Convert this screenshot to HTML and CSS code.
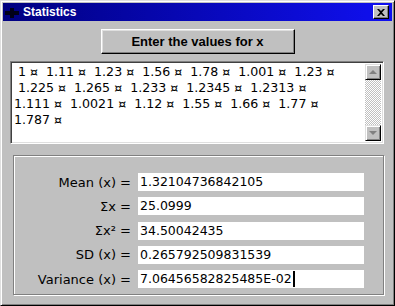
FILE: index.html
```html
<!DOCTYPE html>
<html>
<head>
    <title>Statistics</title>
    <link rel="stylesheet" href="styles.css">
</head>
<body>
    <div class="window">
        <div class="titlebar">
            <svg class="app-icon" width="14" height="10" viewBox="0 0 14 10">
                <path d="M5 0h4v3h5v4h-5v3h-4v-3h-5v-4h5z" fill="#000018"/>
            </svg>
            <span class="title">Statistics</span>
            <div class="close-btn">
                <svg width="8" height="7" viewBox="0 0 8 7">
                    <path d="M0 0h2l2 2 2-2h2l-3 3.5 3 3.5h-2l-2-2-2 2h-2l3-3.5z" fill="#000"/>
                </svg>
            </div>
        </div>

        <div class="client">
            <div class="enter-btn">Enter the values for x</div>

            <div class="values-box">
                <div class="values-text"> 1 ¤  1.11 ¤  1.23 ¤  1.56 ¤  1.78 ¤  1.001 ¤  1.23 ¤
 1.225 ¤  1.265 ¤  1.233 ¤  1.2345 ¤  1.2313 ¤
1.111 ¤  1.0021 ¤  1.12 ¤  1.55 ¤  1.66 ¤  1.77 ¤
1.787 ¤</div>
                <div class="scrollbar">
                    <div class="scroll-btn"><span class="arrow-up"></span></div>
                    <div class="scroll-track"></div>
                    <div class="scroll-btn"><span class="arrow-down"></span></div>
                </div>
            </div>

            <div class="results">
                <span class="label">Mean (x) =</span>
                <div class="field">1.32104736842105</div>
                <span class="label">&Sigma;x =</span>
                <div class="field">25.0999</div>
                <span class="label">&Sigma;x² =</span>
                <div class="field">34.50042435</div>
                <span class="label">SD (x) =</span>
                <div class="field">0.265792509831539</div>
                <span class="label">Variance (x) =</span>
                <div class="field">7.06456582825485E-02<span class="caret"></span></div>
            </div>
        </div>
    </div>
</body>
</html>
```

FILE: styles.css
```css
* {
    box-sizing: border-box;
}
body {
    margin: 0;
    background-color: #c0c0c0;
    font-family: "DejaVu Sans", Verdana, sans-serif;
}
.window {
    width: 395px;
    height: 306px;
    padding: 3px;
    background-color: #c0c0c0;
    border: 1px solid;
    border-color: #dfdfdf #000000 #000000 #dfdfdf;
    box-shadow: inset 1px 1px 0 #ffffff, inset -1px -1px 0 #808080;
}
.titlebar {
    height: 18px;
    margin: -1px -1px 0 -1px;
    display: flex;
    align-items: center;
    padding: 0 3px 0 2px;
    background: linear-gradient(to right, #000080, #1010f0);
    color: #ffffff;
}
.app-icon {
    margin: 1px 4px 0 0;
}
.title {
    font-family: "Liberation Sans", Arial, sans-serif;
    font-weight: bold;
    font-size: 12px;
    flex: 1;
}
.close-btn {
    width: 16px;
    height: 14px;
    background-color: #c0c0c0;
    border: 1px solid;
    border-color: #ffffff #000000 #000000 #ffffff;
    box-shadow: inset -1px -1px 0 #808080;
    display: flex;
    align-items: center;
    justify-content: center;
}
.client {
    display: flex;
    flex-direction: column;
    align-items: center;
}
.enter-btn {
    margin-top: 8px;
    width: 194px;
    height: 25px;
    display: flex;
    align-items: center;
    justify-content: center;
    font-family: "Liberation Sans", Arial, sans-serif;
    font-weight: bold;
    font-size: 13px;
    color: #000000;
    border: 1px solid;
    border-color: #ffffff #000000 #000000 #ffffff;
    box-shadow: inset -1px -1px 0 #808080, inset 1px 1px 0 #dfdfdf;
}
.values-box {
    align-self: flex-start;
    margin: 7px 0 0 6px;
    width: 374px;
    height: 83px;
    display: flex;
    background-color: #ffffff;
    border: 1px solid;
    border-color: #808080 #ffffff #ffffff #808080;
    box-shadow: inset 1px 1px 0 #404040, inset -1px -1px 0 #dfdfdf;
    padding: 2px;
}
.values-text {
    flex: 1;
    white-space: pre;
    font-size: 12.6px;
    line-height: 16px;
    padding: 0 0 0 1px;
    color: #000000;
    overflow: hidden;
}
.scrollbar {
    width: 16px;
    display: flex;
    flex-direction: column;
}
.scroll-btn {
    height: 16px;
    background-color: #c0c0c0;
    border: 1px solid;
    border-color: #dfdfdf #000000 #000000 #dfdfdf;
    box-shadow: inset 1px 1px 0 #ffffff, inset -1px -1px 0 #808080;
    display: flex;
    align-items: center;
    justify-content: center;
}
.arrow-up, .arrow-down {
    width: 0;
    height: 0;
    border-left: 4px solid transparent;
    border-right: 4px solid transparent;
}
.arrow-up {
    border-bottom: 4px solid #808080;
}
.arrow-down {
    border-top: 4px solid #808080;
}
.scroll-track {
    flex: 1;
    background-color: #c0c0c0;
    background-image: repeating-conic-gradient(#ffffff 0 25%, #c0c0c0 0 50%);
    background-size: 2px 2px;
}
.results {
    align-self: flex-start;
    margin: 11px 0 0 9px;
    width: 371px;
    height: 140px;
    border: 1px solid #808080;
    box-shadow: 1px 1px 0 #ffffff, inset 1px 1px 0 #ffffff;
    display: grid;
    grid-template-columns: 117px 226px;
    column-gap: 7px;
    row-gap: 6.25px;
    align-content: start;
    align-items: center;
    padding: 17px 0 0 0;
}
.label {
    text-align: right;
    font-size: 13px;
    color: #000000;
}
.field {
    height: 18px;
    background-color: #ffffff;
    font-size: 12.5px;
    line-height: 18px;
    padding-left: 2px;
    color: #000000;
    display: flex;
    align-items: center;
}
.caret {
    width: 2px;
    height: 16px;
    background-color: #000000;
    margin-left: 1px;
}
```
